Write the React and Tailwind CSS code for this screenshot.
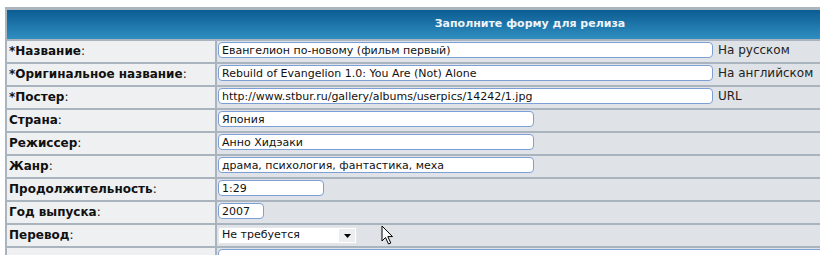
import React from 'react'

const rows = [
  { label: 'Название', req: true, value: 'Евангелион по-новому (фильм первый)', w: 'w-[495px]', note: 'На русском' },
  { label: 'Оригинальное название', req: true, value: 'Rebuild of Evangelion 1.0: You Are (Not) Alone', w: 'w-[495px]', note: 'На английском' },
  { label: 'Постер', req: true, value: 'http://www.stbur.ru/gallery/albums/userpics/14242/1.jpg', w: 'w-[495px]', note: 'URL' },
  { label: 'Страна', value: 'Япония', w: 'w-[316px]' },
  { label: 'Режиссер', value: 'Анно Хидэаки', w: 'w-[316px]' },
  { label: 'Жанр', value: 'драма, психология, фантастика, меха', w: 'w-[316px]' },
  { label: 'Продолжительность', value: '1:29', w: 'w-[106px]' },
  { label: 'Год выпуска', value: '2007', w: 'w-[46px]' },
]

function Label({ children, req }) {
  return (
    <div className="bg-[#eef0f2] h-[21px] pl-[2px] pb-[1px] flex items-center text-[12px] text-[#111]">
      <span className="font-bold">{req ? '*' : ''}{children}</span>
      <span>:</span>
    </div>
  )
}

function Cursor() {
  return (
    <svg className="absolute left-[381px] top-[225px]" width="14" height="21" viewBox="0 0 14 21">
      <path d="M1 1 L1 16 L4.5 12.5 L7.5 19 L9.8 18 L6.8 11.6 L11.5 11.6 Z" fill="#fff" stroke="#000" strokeWidth="1" strokeLinejoin="round" />
    </svg>
  )
}

export default function App() {
  return (
    <div className="relative w-[820px] h-[255px] overflow-hidden bg-white pt-[7px] pl-[5px]" style={{ fontFamily: '"DejaVu Sans", Verdana, sans-serif' }}>
      <div className="w-[1050px] bg-[#aab4bf] pt-[3px] px-[2px]">
        <div className="grid grid-cols-[208px_1fr] gap-[2px]">
          <div className="col-span-2 h-[29px] bg-gradient-to-b from-[#0a5d92] to-[#2f8ec1] flex items-center justify-center text-[11px] font-bold text-[#eef4fa]">
            Заполните форму для релиза
          </div>
          {rows.map((r) => (
            <React.Fragment key={r.label}>
              <Label req={r.req}>{r.label}</Label>
              <div className="bg-[#dfe3e7] h-[21px] pl-[1px] pt-[1px] flex items-start">
                <div className={`${r.w} h-[16px] bg-white border border-[#7c9fd6] rounded-[4px] pl-[3px] text-[11px] leading-[15px] text-[#111] whitespace-nowrap overflow-hidden`}>
                  {r.value}
                </div>
                {r.note && <span className="ml-[5px] text-[12px] leading-[16px] text-[#222]">{r.note}</span>}
              </div>
            </React.Fragment>
          ))}
          <Label>Перевод</Label>
          <div className="bg-[#dfe3e7] h-[21px] pl-[1px] pt-[2px] flex items-start">
            <div className="w-[139px] h-[17px] bg-white border border-[#e4e6e9] flex items-center justify-between pl-[3px] pr-[1px]">
              <span className="text-[11px] text-[#111]">Не требуется</span>
              <span className="w-[16px] h-[13px] bg-[#ecedef] flex items-center justify-center">
                <svg width="7" height="4" viewBox="0 0 7 4"><path d="M0 0 H7 L3.5 4 Z" fill="#000" /></svg>
              </span>
            </div>
          </div>
          <div className="bg-[#eef0f2] h-[21px]"></div>
          <div className="bg-[#dfe3e7] h-[21px] pl-[1px] pt-[1px]">
            <div className="w-full h-[40px] bg-white border border-[#7c9fd6] rounded-[4px]"></div>
          </div>
        </div>
      </div>
      <Cursor />
    </div>
  )
}
